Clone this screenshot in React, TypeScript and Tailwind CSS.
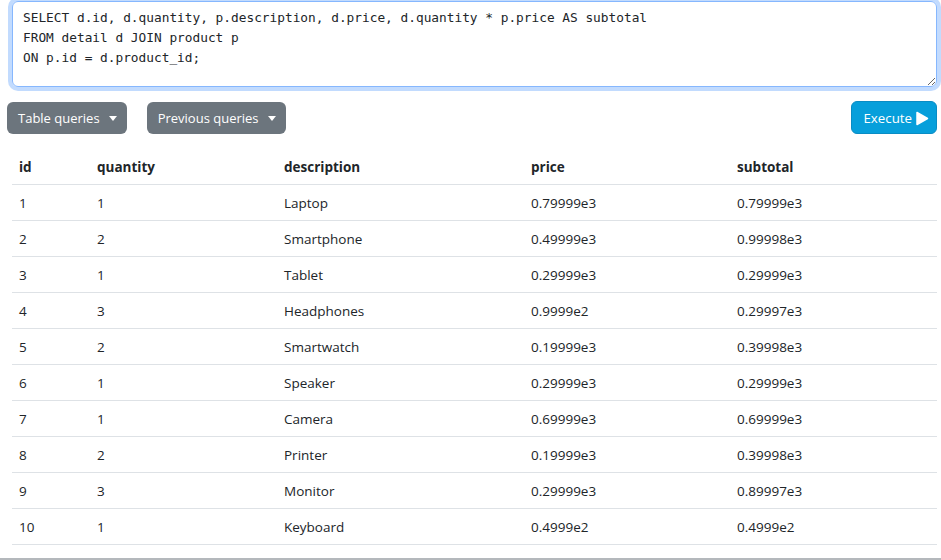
import React from 'react';

const rows = [
  ['1', '1', 'Laptop', '0.79999e3', '0.79999e3'],
  ['2', '2', 'Smartphone', '0.49999e3', '0.99998e3'],
  ['3', '1', 'Tablet', '0.29999e3', '0.29999e3'],
  ['4', '3', 'Headphones', '0.9999e2', '0.29997e3'],
  ['5', '2', 'Smartwatch', '0.19999e3', '0.39998e3'],
  ['6', '1', 'Speaker', '0.29999e3', '0.29999e3'],
  ['7', '1', 'Camera', '0.69999e3', '0.69999e3'],
  ['8', '2', 'Printer', '0.19999e3', '0.39998e3'],
  ['9', '3', 'Monitor', '0.29999e3', '0.89997e3'],
  ['10', '1', 'Keyboard', '0.4999e2', '0.4999e2'],
];

const cols = ['id', 'quantity', 'description', 'price', 'subtotal'];
const widths = ['w-[78px]', 'w-[187px]', 'w-[247px]', 'w-[206px]', 'w-[207px]'];

function Caret() {
  return <span className="ml-[9px] inline-block h-0 w-0 border-x-[4px] border-t-[5px] border-x-transparent border-t-white align-middle" />;
}

export default function App() {
  return (
    <div className="min-h-[560px] bg-white font-['Open_Sans',sans-serif] text-[#212529]">
      <div className="pl-[12px] pr-[4px] pt-[1px]">
        <div className="relative">
          <textarea
            defaultValue={'SELECT d.id, d.quantity, p.description, d.price, d.quantity * p.price AS subtotal\nFROM detail d JOIN product p\nON p.id = d.product_id;'}
            className="block h-[86px] w-full resize-y rounded-[6px] border border-[#86b7fe] px-[10px] py-[6px] font-['DejaVu_Sans_Mono',monospace] text-[12.8px] leading-[20px] text-[#212529] shadow-[0_0_0_4px_rgba(13,110,253,0.25)] outline-none"
            spellCheck={false}
          />
        </div>
      </div>

      <div className="mt-[14px] flex items-center pl-[7px] pr-[4px]">
        <button className="flex h-[32px] items-center rounded-[6px] bg-[#6c757d] pl-[11px] pr-[10px] pt-[2px] text-[13px] text-white">
          Table queries
          <Caret />
        </button>
        <button className="ml-[20px] flex h-[32px] items-center rounded-[6px] bg-[#6c757d] pl-[11px] pr-[10px] pt-[2px] text-[13px] text-white">
          Previous queries
          <Caret />
        </button>
        <button className="ml-auto flex h-[33px] items-center rounded-[6px] border border-[#0a8cc4] bg-[#079fdb] pl-[11px] pr-[7px] pt-[2px] text-[13.3px] text-white">
          Execute
          <svg width="14" height="15" viewBox="0 0 14 15" className="ml-[3px]">
            <path d="M2 1.5 L12.5 7.5 L2 13.5 Z" fill="white" stroke="white" strokeWidth="1.5" strokeLinejoin="round" />
          </svg>
        </button>
      </div>

      <div className="mt-[15px] pl-[12px] pr-[4px]">
        <table className="w-full border-collapse text-[13.5px]">
          <thead>
            <tr className="h-[35px] border-b border-[#dee2e6]">
              {cols.map((c, i) => (
                <th key={c} className={`${widths[i]} px-[7px] pt-[2px] text-left font-bold`}>
                  {c}
                </th>
              ))}
            </tr>
          </thead>
          <tbody>
            {rows.map((r) => (
              <tr key={r[0]} className="h-[36px] border-b border-[#dee2e6]">
                {r.map((v, i) => (
                  <td key={i} className="px-[7px] pt-[3px]">
                    {v}
                  </td>
                ))}
              </tr>
            ))}
          </tbody>
        </table>
      </div>
      <div className="mt-[13px] border-t-2 border-[#b4b8bc]" />
    </div>
  );
}
